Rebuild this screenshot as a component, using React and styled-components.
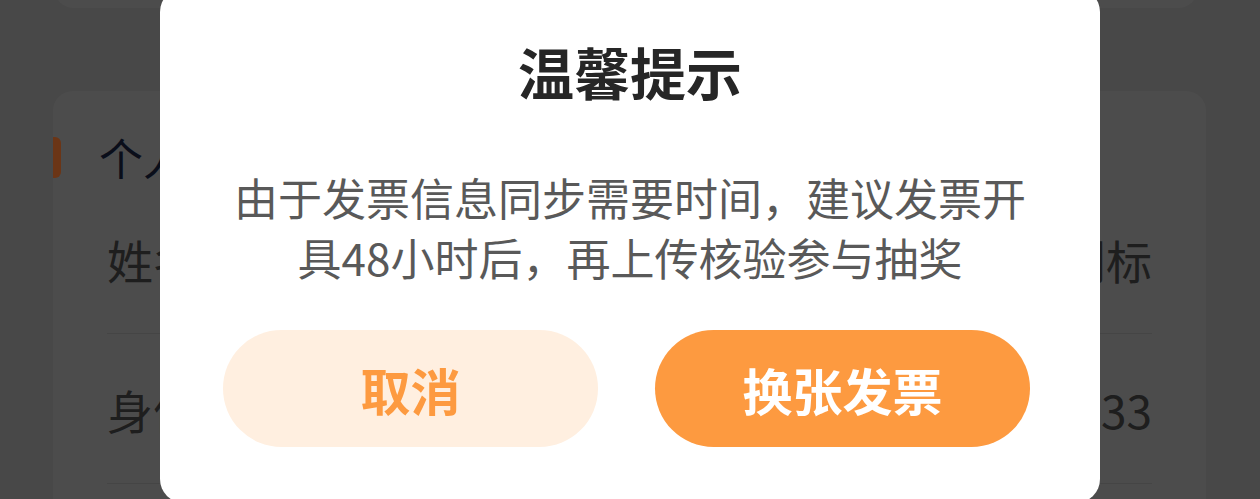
import React from "react";
import styled, { createGlobalStyle } from "styled-components";

const GlobalStyle = createGlobalStyle`
  html, body {
    margin: 0;
    padding: 0;
    height: 100%;
    overflow: hidden;
    background: #a0a0a0;
    font-family: "Noto Sans CJK SC", "Noto Sans", sans-serif;
  }
  #root { height: 100%; }
`;

const Page = styled.div`
  height: 100%;
  padding: 0 54px;
  display: flex;
  flex-direction: column;
  gap: 83px;
`;

const TopCard = styled.div`
  margin-top: -40px;
  height: 48px;
  background: #a9a9a9;
  border-radius: 20px;
  margin-right: 8px;
`;

const InfoCard = styled.section`
  background: #a9a9a9;
  border-radius: 20px 20px 0 0;
  padding-top: 44px;
  flex: 1;
  margin-left: -1px;
`;

const SectionTitle = styled.div`
  display: flex;
  align-items: center;
  gap: 38px;
  height: 44px;
  font-size: 44px;
  line-height: 44px;
  color: #18213a;
`;

const Accent = styled.span`
  width: 8px;
  height: 41px;
  background: #ee7631;
  border-radius: 0 6px 6px 0;
`;

const Row = styled.div`
  margin: 5px 54px 0 54px;
  height: 149px;
  border-bottom: 1px solid #9a9a9a;
  display: flex;
  align-items: center;
  justify-content: space-between;
  font-size: 46px;
  color: #434343;
  & + & { margin-top: 0; }
`;

const Overlay = styled.div`
  position: fixed;
  inset: 0;
  background: rgba(0, 0, 0, 0.55);
  display: flex;
  justify-content: center;
  align-items: flex-start;
`;

const Dialog = styled.div`
  margin-top: -12px;
  width: 940px;
  height: 515px;
  background: #ffffff;
  border-radius: 24px;
  padding-top: 55px;
  box-sizing: border-box;
  display: flex;
  flex-direction: column;
  align-items: center;
`;

const Title = styled.h2`
  margin: 0;
  font-size: 56px;
  line-height: 56px;
  font-weight: 700;
  color: #262626;
`;

const Body = styled.p`
  margin: 68px 0 0 0;
  width: 800px;
  text-align: center;
  font-size: 44px;
  line-height: 60px;
  color: #595959;
`;

const Actions = styled.div`
  margin-top: 43px;
  display: flex;
  gap: 57px;
  margin-right: 7px;
`;

const Button = styled.button`
  width: 375px;
  height: 117px;
  border: none;
  border-radius: 59px;
  font-family: inherit;
  font-size: 50px;
  font-weight: 700;
  display: flex;
  align-items: center;
  justify-content: center;
  background: ${(p) => (p.$primary ? "#fd9a40" : "#ffefe0")};
  color: ${(p) => (p.$primary ? "#ffffff" : "#fd9a40")};
`;

export default function App() {
  return (
    <>
      <GlobalStyle />
      <Page>
        <TopCard />
        <InfoCard>
          <SectionTitle>
            <Accent />
            <span>个人信息</span>
          </SectionTitle>
          <Row>
            <span>姓名</span>
            <span>刘标</span>
          </Row>
          <Row>
            <span>身份证号</span>
            <span>0033</span>
          </Row>
        </InfoCard>
      </Page>
      <Overlay>
        <Dialog>
          <Title>温馨提示</Title>
          <Body>由于发票信息同步需要时间，建议发票开具48小时后，再上传核验参与抽奖</Body>
          <Actions>
            <Button>取消</Button>
            <Button $primary>换张发票</Button>
          </Actions>
        </Dialog>
      </Overlay>
    </>
  );
}
